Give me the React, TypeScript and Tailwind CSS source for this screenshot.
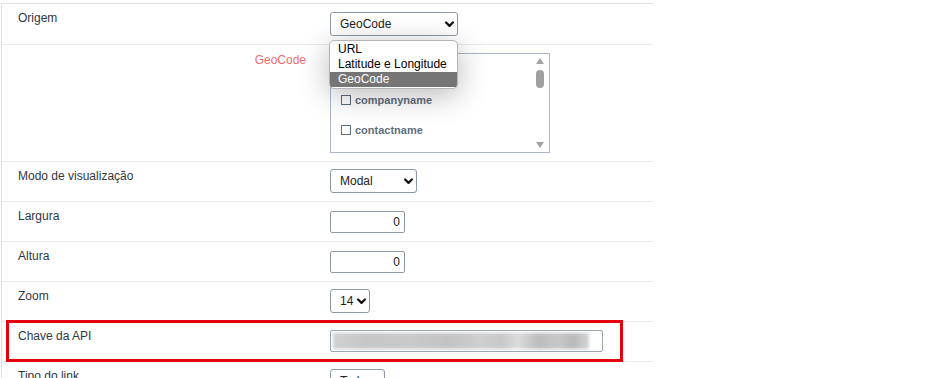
import { ReactNode } from "react";

const Chevron = () => (
  <svg width="9" height="7" viewBox="0 0 9 7">
    <path d="M1.1 1.5 L4.5 4.9 L7.9 1.5" fill="none" stroke="#111" strokeWidth="2.2" strokeLinecap="round" strokeLinejoin="round" />
  </svg>
);

const FakeSelect = ({ value, width }: { value: string; width: string }) => (
  <div className={`${width} h-[24px] border border-[#8f99a6] rounded-[3px] bg-white flex items-center justify-between pl-[9px] pr-[3px] text-[12px] text-[#222]`}>
    <span>{value}</span>
    <Chevron />
  </div>
);

const NumberInput = ({ value }: { value: string }) => (
  <div className="w-[75px] h-[22px] border border-[#8f99a6] rounded-[2px] bg-white flex items-center justify-end pr-[4px] text-[12px] text-[#222]">
    {value}
  </div>
);

const Row = ({ label, children, height = "h-[40px]", extra }: { label: ReactNode; children: ReactNode; height?: string; extra?: ReactNode }) => (
  <div className={`relative flex ${height} border-b border-[#e8ebef]`}>
    <div className="w-[328px] pl-[16px] pt-[7px] text-[12px] leading-[14px] text-[#2f3642]">{label}</div>
    <div className="pt-[7px]">{children}</div>
    {extra}
  </div>
);

const Check = ({ label }: { label?: string }) => (
  <div className="flex items-center gap-[4px] h-[30px]">
    <span className="w-[10px] h-[10px] border border-[#5d6b7a]" />
    {label && <span className="text-[11px] font-bold text-[#5f6e7d]">{label}</span>}
  </div>
);

export default function App() {
  return (
    <div className="w-[945px] h-[378px] overflow-hidden bg-white pt-[3px] font-['Liberation_Sans',Arial,sans-serif]">
      <div className="ml-[1px] w-[652px] border-l border-t border-[#dde3ea]">
        <Row label="Origem" height="h-[41px]">
          <div className="relative pt-[1px]">
            <FakeSelect value="GeoCode" width="w-[128px]" />
            {/* aberto: lista de opções do select */}
            <div className="absolute left-[-1px] top-[29px] z-10 w-[129px] bg-white border border-[#b5b5b5] rounded-[5px] py-[1px] shadow-[0_6px_30px_rgba(0,0,0,0.28)] text-[12px] leading-[15px] text-black overflow-hidden">
              <div className="pl-[8px] h-[15px]">URL</div>
              <div className="pl-[8px] h-[15px]">Latitude e Longitude</div>
              <div className="pl-[8px] h-[15px] bg-[#757575] text-white">GeoCode</div>
            </div>
          </div>
        </Row>

        <div className="flex h-[117px] border-b border-[#e8ebef]">
          <div className="w-[328px] flex justify-end pr-[24px] pt-[8px] text-[12px] leading-[14px] text-[#f26d6d]">GeoCode</div>
          <div className="pt-[8px]">
            <div className="relative w-[220px] h-[100px] border border-[#a9b6c7] bg-white flex">
              <div className="flex-1 pl-[10px] pt-[1px]">
                <Check />
                <Check label="companyname" />
                <Check label="contactname" />
              </div>
              <div className="w-[16px] flex flex-col items-center justify-between py-[4px] pr-[2px]">
                <div className="flex flex-col items-center gap-[6px]">
                  <svg width="8" height="6" viewBox="0 0 8 6"><path d="M4 0 L8 6 L0 6 Z" fill="#a3a3a3" /></svg>
                  <div className="w-[8px] h-[18px] rounded-[4px] bg-[#a0a0a0]" />
                </div>
                <svg width="8" height="6" viewBox="0 0 8 6"><path d="M0 0 L8 0 L4 6 Z" fill="#a3a3a3" /></svg>
              </div>
            </div>
          </div>
        </div>

        <Row label="Modo de visualização">
          <FakeSelect value="Modal" width="w-[87px]" />
        </Row>

        <Row label="Largura">
          <div className="pt-[2px]"><NumberInput value="0" /></div>
        </Row>

        <Row label="Altura">
          <div className="pt-[2px]"><NumberInput value="0" /></div>
        </Row>

        <Row label="Zoom">
          <FakeSelect value="14" width="w-[40px]" />
        </Row>

        <Row
          label="Chave da API"
          extra={<div className="absolute left-[4px] top-[-2px] w-[617px] h-[42px] border-[3px] border-[#e5000b]" />}
        >
          <div className="pt-[1px]">
            <div className="w-[273px] h-[22px] border border-[#9aa5b3] rounded-[2px] bg-white px-[2px] py-[2px] overflow-hidden">
              <div className="w-[256px] h-full blur-[1.5px] bg-[linear-gradient(90deg,#d2d2d2_0%,#c6c6c6_12%,#c9c9c9_30%,#c3c3c3_45%,#cfcfcf_58%,#c8c8c8_66%,#dcdcdc_72%,#bdbdbd_80%,#c7c7c7_88%,#b9b9b9_94%,#d6d6d6_100%)]" />
            </div>
          </div>
        </Row>

        <Row label="Tipo do link">
          <FakeSelect value="Todos" width="w-[55px]" />
        </Row>
      </div>
    </div>
  );
}
